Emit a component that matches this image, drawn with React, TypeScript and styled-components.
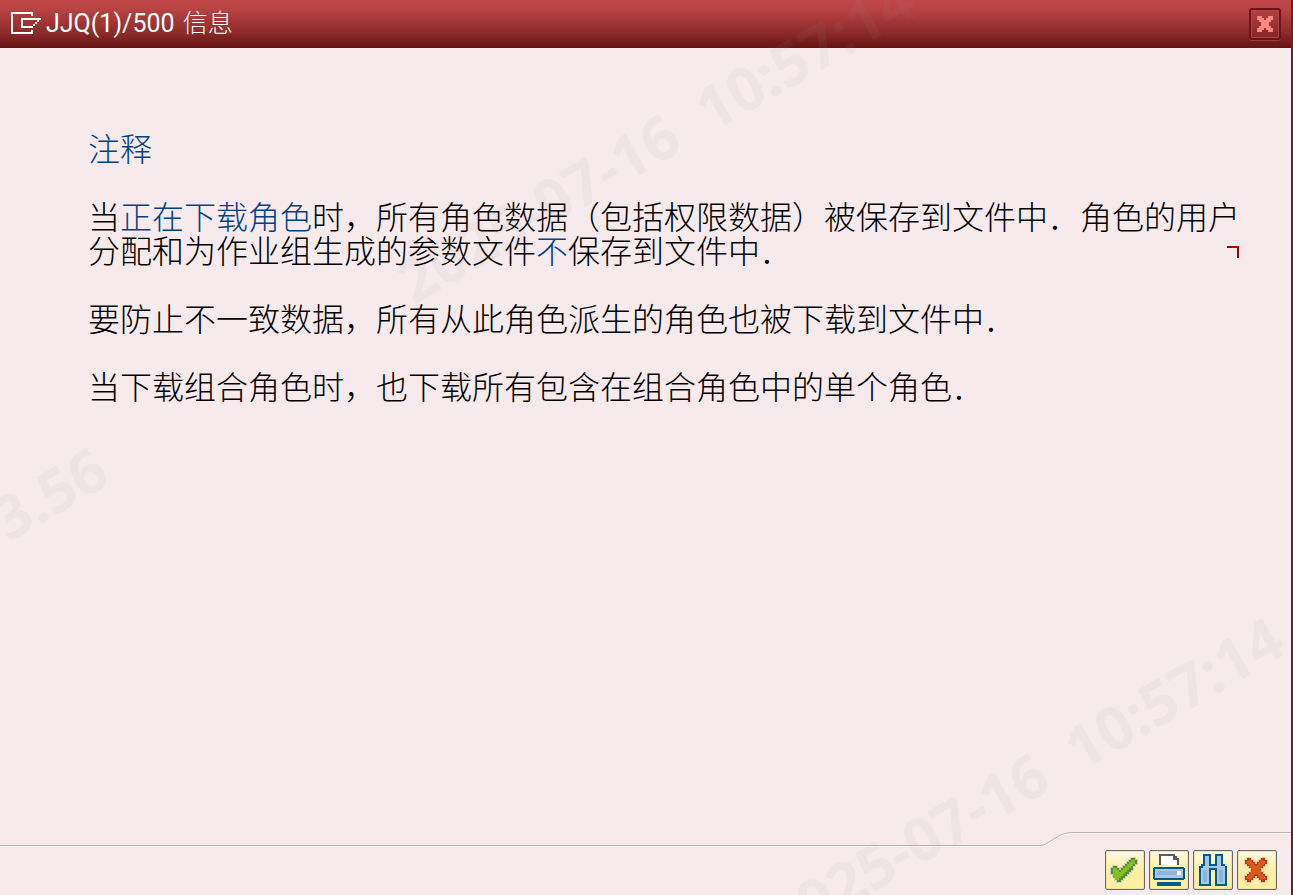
import React from "react";
import styled, { createGlobalStyle } from "styled-components";

const GlobalStyle = createGlobalStyle`
  * { box-sizing: border-box; }
  body { margin: 0; background: #f6eaec; }
`;

const Dialog = styled.div`
  position: relative;
  display: flex;
  flex-direction: column;
  min-height: 100vh;
  overflow: hidden;
  background: #f6eaec;
  border-right: 2px solid #701f24;
`;

const TitleBar = styled.header`
  display: flex;
  align-items: flex-start;
  justify-content: space-between;
  height: 48px;
  padding: 0 10px 0 11px;
  background: linear-gradient(#c14747 0%, #b84343 20%, #8b2929 70%, #6c1719 94%, #641316 100%);
`;

const Title = styled.h1`
  display: flex;
  align-items: center;
  gap: 5px;
  margin: 0;
  color: #fff;
  font: 400 25px/42px Roboto, "Noto Sans CJK SC", sans-serif;
`;

const TitleCjk = styled.span`
  margin-left: 2px;
  font-family: "Noto Sans CJK SC", sans-serif;
  font-weight: 300;
`;

const CloseButton = styled.button`
  display: flex;
  align-items: center;
  justify-content: center;
  width: 32px;
  height: 32px;
  margin-top: 8px;
  padding: 0;
  border: 2px solid #6c1518;
  border-radius: 3px;
  background: linear-gradient(#b44141, #842425);
  box-shadow: inset 0 0 0 1px #b04443, 0 1px 0 #9c3a3a;
`;

const Content = styled.main`
  flex: 1;
  padding: 82px 48px 34px 88px;
  color: #000;
  font: 300 32px/34px "Noto Sans CJK SC", sans-serif;
`;

const Heading = styled.h2`
  margin: 0 0 34px;
  color: #004289;
  font: inherit;
`;

const Paragraph = styled.p`
  position: relative;
  margin: 0 0 34px;
`;

const Term = styled.em`
  color: #004289;
  font-style: normal;
`;

const LineEndMark = styled.span`
  position: absolute;
  right: 4px;
  bottom: 8px;
  width: 12px;
  height: 12px;
  border: solid #a80000;
  border-width: 2px 2px 0 0;
`;

const Footer = styled.footer`
  display: flex;
  height: 63px;
`;

const FooterEdge = styled.div`
  flex: 1;
  margin-top: 13px;
  border-top: 1px solid #c9a9af;
  box-shadow: inset 0 1px 0 #fff;
`;

const FooterCurve = styled.svg`
  display: block;
  flex: none;
`;

const Toolbar = styled.div`
  display: flex;
  gap: 4px;
  padding: 17px 14px 0 33px;
  border-top: 1px solid #c9a9af;
  box-shadow: inset 0 1px 0 #fff;
`;

const ToolButton = styled.button`
  display: block;
  width: 40px;
  height: 40px;
  padding: 0;
  border: 1px solid #6d6763;
  border-radius: 2px;
  background: linear-gradient(#fffbe6 0%, #fff5c2 25%, #ffeea6 50%, #ffeea0 100%);
  box-shadow: inset 0 0 0 1px #f3e3a0;
`;

const Icon = styled.svg`
  display: block;
`;

const WatermarkLayer = styled.div`
  position: absolute;
  inset: 0;
  overflow: hidden;
  pointer-events: none;
`;

const Watermark = styled.span<{ $x: number; $y: number }>`
  position: absolute;
  left: ${(p) => p.$x}px;
  top: ${(p) => p.$y}px;
  color: rgba(150, 150, 150, 0.08);
  font: 700 60px/60px "Open Sans", sans-serif;
  white-space: pre;
  transform: rotate(-30deg);
  transform-origin: 0 50px;
`;

const marks = [
  { text: "2025-07-16  10:57:14", x: 412, y: 253 },
  { text: "2025-07-16  10:57:14", x: 781, y: 892 },
  { text: "3.56", x: 7, y: 490 },
];

export default function App() {
  return (
    <Dialog role="dialog" aria-labelledby="title">
      <GlobalStyle />
      <TitleBar>
        <Title id="title">
          <svg width="30" height="22" viewBox="0 0 30 22" fill="#fff" shapeRendering="crispEdges" aria-hidden="true">
            <path d="M0 0h22v4h-2V2H2v18h18v-2h2v4H0z" />
            <path d="M10 6h20v2h-2v2h-2v2h-2v2h-2v2H10zM12 8v6h10v-2h2v-2h2V8z" fillRule="evenodd" />
          </svg>
          <span>
            JJQ(1)/500 <TitleCjk>信息</TitleCjk>
          </span>
        </Title>
        <CloseButton aria-label="关闭">
          <svg width="18" height="18" viewBox="0 0 18 18" shapeRendering="crispEdges" aria-hidden="true">
            <path fill="#ff8786" d="M1 1h5v2h2v2h2V3h2V1h5v4h-2v2h-2v4h2v2h2v4h-5v-2h-2v-2H8v2H6v2H1v-4h2v-2h2V7H3V5H1z" />
          </svg>
        </CloseButton>
      </TitleBar>

      <Content>
        <Heading>注释</Heading>
        <Paragraph>
          当<Term>正在下载角色</Term>时，所有角色数据（包括权限数据）被保存到文件中．角色的用户
          <br />
          分配和为作业组生成的参数文件<Term>不</Term>保存到文件中．
          <LineEndMark />
        </Paragraph>
        <Paragraph>要防止不一致数据，所有从此角色派生的角色也被下载到文件中．</Paragraph>
        <Paragraph>当下载组合角色时，也下载所有包含在组合角色中的单个角色．</Paragraph>
      </Content>

      <Footer>
        <FooterEdge />
        <FooterCurve width="32" height="16" viewBox="0 0 32 16" fill="none" aria-hidden="true">
          <path d="M0 14.5C9 14.5 17 1.500 32 1.500" stroke="#fff" />
          <path d="M0 13.500C9 13.500 17 .5 32 .5" stroke="#c9a9af" />
        </FooterCurve>
        <Toolbar>
          <ToolButton aria-label="继续">
            <Icon width="38" height="38" viewBox="1 1 38 38" shapeRendering="crispEdges" aria-hidden="true">
              <path
                d="M26 8h4v2h2v4h-2v2h-2v4h-2v2h-2v2h-2v2h-2v2h-2v2h-2v2h-4v-2h-2v-4H8v-2H6v-6h2v-2h4v2h2v2h2v-2h2v-2h2v-2h2v-2h2v-2h2z"
                fill="#4c9038"
                stroke="#cfcfb8"
                strokeWidth="2"
                paintOrder="stroke"
              />
              <path d="M8 18h4v2h2v2h2v-2h2v-2h2v-2h2v-2h2v-2h2v-2h4v4h-2v2h-2v2h-2v2h-2v2h-2v2h-2v2h-2v2h-2v2h-4v-2h-2v-4H8z" fill="#84bd26" />
            </Icon>
          </ToolButton>
          <ToolButton aria-label="打印">
            <Icon width="38" height="38" viewBox="1 1 38 38" shapeRendering="crispEdges" aria-hidden="true">
              <path d="M10 4h16v2h2v2h2v7H10z" fill="#5b5b5b" />
              <path d="M12 6h12v4h4v5H12z" fill="#fff" />
              <path d="M5 17h30v1h1v11h-1v1H5v-1H4V18h1z" fill="#005b92" />
              <path d="M6 19h28v9H6z" fill="#a9c6e4" />
              <path d="M8 21h20v4H8z" fill="#8fb3da" />
              <path d="M28 21h4v4h-4z" fill="#fff" />
              <path d="M8 32h24v4H8z" fill="#005b92" />
            </Icon>
          </ToolButton>
          <ToolButton aria-label="查找">
            <Icon width="38" height="38" viewBox="1 1 38 38" shapeRendering="crispEdges" aria-hidden="true">
              <path d="M10 4h8v10h4V4h8v10h2v2h2v20H22V20h-4v16H6V16h2v-2h2z" fill="#005b92" />
              <path d="M12 6h4v10h8V6h4v10h4v18h-8V18h-8v16H8V18h2v-2h2z" fill="#a9c6e4" />
              <path d="M10 20h4v12h-4zM26 20h4v12h-4z" fill="#8fb3da" />
            </Icon>
          </ToolButton>
          <ToolButton aria-label="取消">
            <Icon width="38" height="38" viewBox="1 1 38 38" shapeRendering="crispEdges" aria-hidden="true">
              <path
                d="M10 8h4v2h2v2h2v2h2v-2h2v-2h2V8h4v2h2v4h-2v2h-2v2h-2v4h2v2h2v2h2v4h-2v2h-4v-2h-2v-2h-2v-2h-2v2h-2v2h-2v2h-4v-2H8v-4h2v-2h2v-2h2v-4h-2v-2h-2v-2H8v-4h2z"
                fill="#b83a1c"
                stroke="#e3d3a4"
                strokeWidth="2"
                paintOrder="stroke"
              />
              <path d="M11 11l16 18M27 11L11 29" fill="none" stroke="#dc5a17" strokeWidth="5" />
            </Icon>
          </ToolButton>
        </Toolbar>
      </Footer>

      <WatermarkLayer aria-hidden="true">
        {marks.map((m, i) => (
          <Watermark key={i} $x={m.x} $y={m.y}>
            {m.text}
          </Watermark>
        ))}
      </WatermarkLayer>
    </Dialog>
  );
}
